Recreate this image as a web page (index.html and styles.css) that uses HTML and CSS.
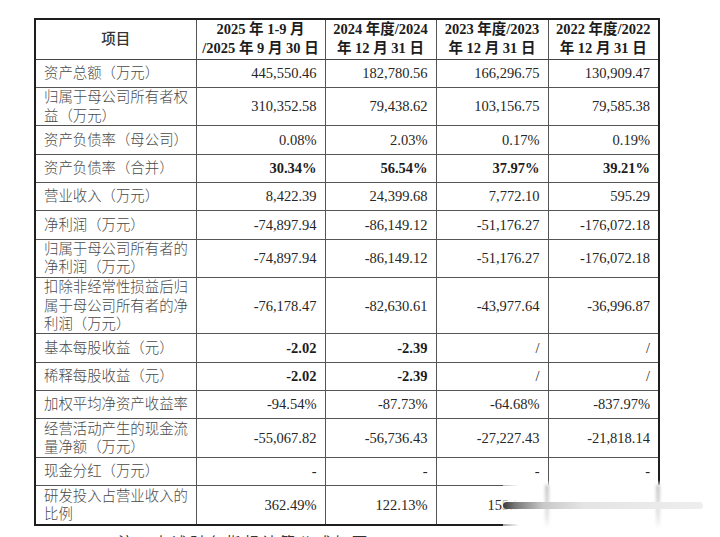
FILE: index.html
```html
<!DOCTYPE html>
<html lang="zh-CN">
<head>
<meta charset="utf-8">
<title>主要财务数据</title>
<link rel="stylesheet" href="styles.css">
</head>
<body>
<div class="page">
  <table class="fin">
    <colgroup>
      <col class="c-label">
      <col class="c-a">
      <col class="c-b">
      <col class="c-c">
      <col class="c-d">
    </colgroup>
    <thead>
      <tr class="hd">
        <th class="th-item">项目</th>
        <th>2025 年 1-9 月<br>/2025 年 9 月 30 日</th>
        <th>2024 年度/2024<br>年 12 月 31 日</th>
        <th>2023 年度/2023<br>年 12 月 31 日</th>
        <th>2022 年度/2022<br>年 12 月 31 日</th>
      </tr>
    </thead>
    <tbody>
      <tr class="s"><td class="lb">资产总额（万元）</td><td>445,550.46</td><td>182,780.56</td><td>166,296.75</td><td>130,909.47</td></tr>
      <tr class="d"><td class="lb">归属于母公司所有者权益（万元）</td><td>310,352.58</td><td>79,438.62</td><td>103,156.75</td><td>79,585.38</td></tr>
      <tr class="s"><td class="lb">资产负债率（母公司）</td><td>0.08%</td><td>2.03%</td><td>0.17%</td><td>0.19%</td></tr>
      <tr class="s"><td class="lb">资产负债率（合并）</td><td class="b">30.34%</td><td class="b">56.54%</td><td class="b">37.97%</td><td class="b">39.21%</td></tr>
      <tr class="s"><td class="lb">营业收入（万元）</td><td>8,422.39</td><td>24,399.68</td><td>7,772.10</td><td>595.29</td></tr>
      <tr class="s"><td class="lb">净利润（万元）</td><td>-74,897.94</td><td>-86,149.12</td><td>-51,176.27</td><td>-176,072.18</td></tr>
      <tr class="d"><td class="lb">归属于母公司所有者的净利润（万元）</td><td>-74,897.94</td><td>-86,149.12</td><td>-51,176.27</td><td>-176,072.18</td></tr>
      <tr class="t"><td class="lb">扣除非经常性损益后归属于母公司所有者的净利润（万元）</td><td>-76,178.47</td><td>-82,630.61</td><td>-43,977.64</td><td>-36,996.87</td></tr>
      <tr class="s"><td class="lb">基本每股收益（元）</td><td class="b">-2.02</td><td class="b">-2.39</td><td>/</td><td>/</td></tr>
      <tr class="s"><td class="lb">稀释每股收益（元）</td><td class="b">-2.02</td><td class="b">-2.39</td><td>/</td><td>/</td></tr>
      <tr class="s"><td class="lb">加权平均净资产收益率</td><td>-94.54%</td><td>-87.73%</td><td>-64.68%</td><td>-837.97%</td></tr>
      <tr class="d"><td class="lb">经营活动产生的现金流量净额（万元）</td><td>-55,067.82</td><td>-56,736.43</td><td>-27,227.43</td><td>-21,818.14</td></tr>
      <tr class="s"><td class="lb">现金分红（万元）</td><td>-</td><td>-</td><td>-</td><td>-</td></tr>
      <tr class="d"><td class="lb">研发投入占营业收入的比例</td><td>362.49%</td><td>122.13%</td><td>155.36%</td><td>2,032.16%</td></tr>
    </tbody>
  </table>
  <p class="after">注：上述财务指标计算公式如下</p>

  <div class="wm" aria-hidden="true">
    <div class="wm-top"></div>
    <div class="wm-line wm-l1"></div>
    <div class="wm-line wm-l2"></div>
    <div class="wm-pill"></div>
  </div>
</div>
</body>
</html>
```

FILE: styles.css
```css
html, body {
  margin: 0;
  padding: 0;
  background: #ffffff;
  overflow: hidden;
}

.page {
  position: relative;
  width: 720px;
  height: 537px;
  padding: 18px 0 0 34px;
  box-sizing: border-box;
  font-family: "Liberation Serif", "Noto Sans CJK SC", serif;
  color: #262626;
}

.fin {
  border-collapse: collapse;
  table-layout: fixed;
  width: 624px;
  border: 2px solid #1e1e1e;
  font-size: 14.5px;
}

.c-label { width: 161px; }
.c-a { width: 129px; }
.c-b { width: 111px; }
.c-c { width: 112px; }
.c-d { width: 111px; }

.fin th,
.fin td {
  border: 1px solid #555555;
  padding: 0 8px 0 0;
  vertical-align: middle;
  text-align: right;
  line-height: 18.4px;
  white-space: normal;
}

.fin th {
  font-weight: bold;
  text-align: center;
  padding: 0;
  line-height: 19px;
  color: #1c1c1c;
}

.fin .th-item {
  font-weight: 500;
  color: #333333;
}

.fin thead th {
  border-bottom: 1px solid #444444;
}

.hd th { height: 38.5px; }
.s td { height: 27.3px; }
.d td { height: 37.6px; }
.t td { height: 55px; }

.fin td.lb {
  text-align: left;
  padding: 0 0 0 8px;
  color: #4a4a4a;
  font-size: 14.4px;
  font-weight: 300;
  letter-spacing: 0;
}

.fin td.b {
  font-weight: bold;
  color: #1c1c1c;
}

.after {
  margin: 5px 0 0 84px;
  font-size: 15px;
  color: #333333;
  letter-spacing: 3px;
}

/* watermark overlay at bottom right */
.wm {
  position: absolute;
  left: 503px;
  top: 485px;
  width: 217px;
  height: 48px;
}

.wm::before {
  content: "";
  position: absolute;
  inset: 0;
  background: linear-gradient(to right, rgba(255,255,255,0.6) 0, #ffffff 16px, #ffffff 100%);
}

.wm-top {
  position: absolute;
  left: 40px;
  top: -5px;
  width: 177px;
  height: 6px;
  background: linear-gradient(to bottom, rgba(255,255,255,0) 0, rgba(255,255,255,0.85) 100%);
}

.wm-line {
  position: absolute;
  top: 0;
  width: 4px;
  height: 44px;
  background: linear-gradient(to bottom, rgba(150,150,150,0.55), rgba(180,180,180,0.35) 70%, rgba(220,220,220,0));
  filter: blur(1.5px);
}

.wm-l1 { left: 42px; }
.wm-l2 { left: 153px; }

.wm-pill {
  position: absolute;
  left: 0;
  top: 17px;
  width: 200px;
  height: 7px;
  border-radius: 4px;
  background: linear-gradient(to right, #3a3a3a 0, #777777 6%, #c8c8c8 20%, #e4e4e4 40%, #eeeeee 100%);
}
```
